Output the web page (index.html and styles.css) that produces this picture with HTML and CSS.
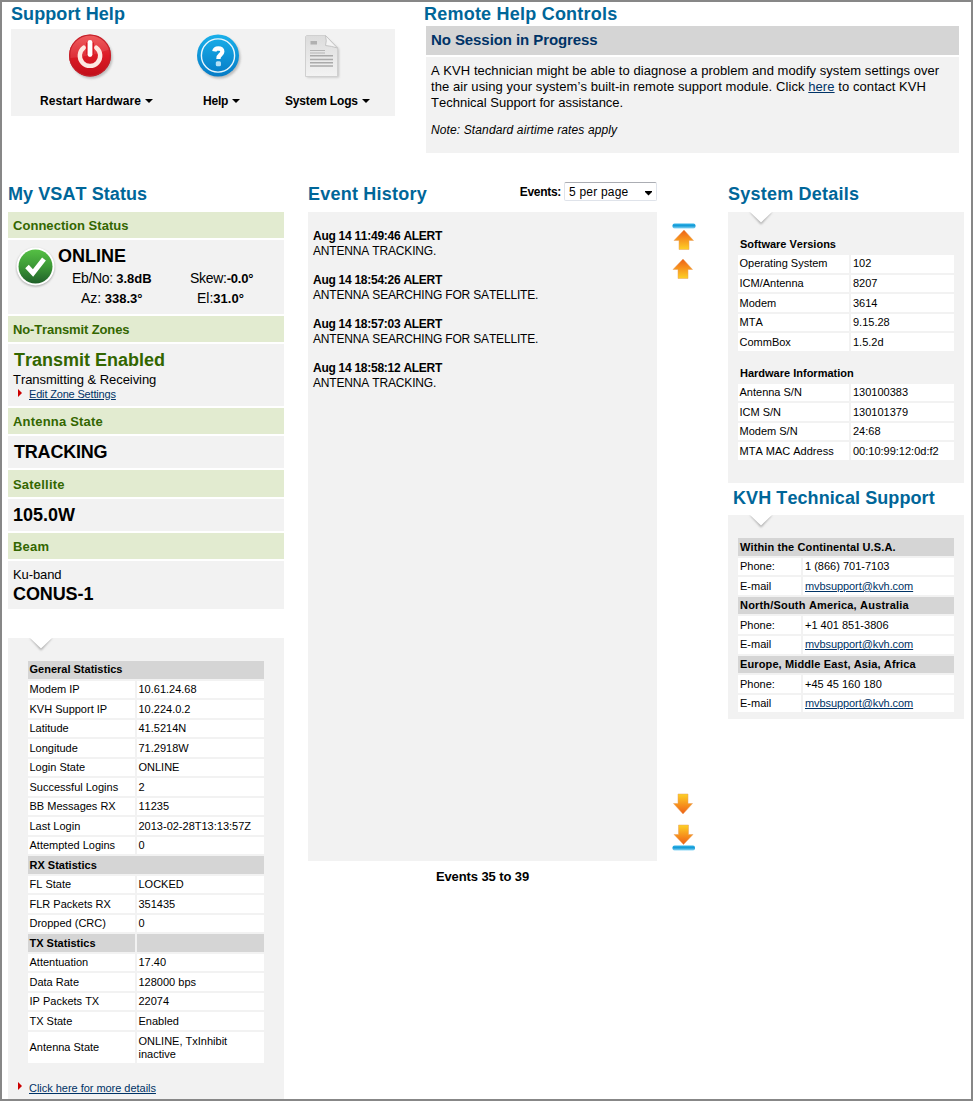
FILE: index.html
```
<!DOCTYPE html>
<html lang="en">
<head>
<meta charset="utf-8">
<title>VSAT Support</title>
<link rel="stylesheet" href="styles.css">
</head>
<body>
<div class="frame">
  <div class="top">
    <section class="support">
      <h2 class="title">Support Help</h2>
      <div class="toolbar">
        <div class="tool tool-restart">
          <svg class="tool-icon" width="46" height="48" viewBox="0 0 46 48">
            <defs>
              <linearGradient id="red" x1="0" y1="0" x2="0" y2="1"><stop offset="0" stop-color="#ee4a4c"/><stop offset=".5" stop-color="#dc1c26"/><stop offset="1" stop-color="#c00d18"/></linearGradient>
              <filter id="soft" x="-20%" y="-20%" width="140%" height="140%"><feGaussianBlur stdDeviation="1.3"/></filter>
            </defs>
            <circle cx="22.500" cy="23.500" r="21" fill="#999" opacity=".6" filter="url(#soft)"/>
            <circle cx="21" cy="21.500" r="21" fill="url(#red)"/>
            <circle cx="21" cy="21.500" r="20.300" fill="none" stroke="#c3202a" stroke-width="1.200"/>
            <path d="M1.500 24Q20 23 40 15.500A20 20 0 0 0 2 15Q1 20 1.500 24Z" fill="#fff" opacity=".1"/>
            <path d="M14.700 13.700A10.200 10.200 0 1 0 27.300 13.700" fill="none" stroke="#fde9e2" stroke-width="4.400" stroke-linecap="round"/>
            <path d="M21 8.500V20.500" stroke="#dc1c26" stroke-width="8"/>
            <path d="M21 8.500V20.500" stroke="#fff" stroke-width="4.800" stroke-linecap="round"/>
          </svg>
          <div class="tool-label"><span class="restart-text">Restart Hardware</span><i class="caret"></i></div>
        </div>
        <div class="tool tool-help">
          <svg class="tool-icon" width="46" height="48" viewBox="0 0 46 48">
            <defs>
              <linearGradient id="blue" x1="0" y1="0" x2="0" y2="1"><stop offset="0" stop-color="#1ab0ea"/><stop offset="1" stop-color="#057bc6"/></linearGradient>
            </defs>
            <circle cx="22.500" cy="23.500" r="21" fill="#999" opacity=".6" filter="url(#soft)"/>
            <circle cx="21" cy="21.500" r="21" fill="url(#blue)"/>
            <circle cx="21" cy="21.500" r="16.600" fill="none" stroke="#eaf7fd" stroke-width="1.400"/>
            <path d="M17.300 17.300Q17.800 14.400 21.300 14.400Q25.400 14.500 25.300 17.600Q25.200 19.300 23.400 20.800Q21.500 22.300 21.400 25" fill="none" stroke="#fff" stroke-width="4.300"/>
            <rect x="18.800" y="27.300" width="5.200" height="4.900" rx="1.500" fill="#b5e0f6"/>
          </svg>
          <div class="tool-label">Help<i class="caret"></i></div>
        </div>
        <div class="tool tool-logs">
          <svg class="tool-icon" width="40" height="48" viewBox="0 0 40 48">
            <defs>
              <linearGradient id="paper" x1="0" y1="0" x2="0" y2="1"><stop offset="0" stop-color="#dcdcdc"/><stop offset="1" stop-color="#f3f3f3"/></linearGradient>
            </defs>
            <path d="M2 4H22L34 15V43.500H2Z" fill="#999" opacity=".55" filter="url(#soft)"/>
            <path d="M1.500 1.500H20.500L32.500 14V42.500H.5V2.500Z" fill="url(#paper)" stroke="#d0d0d0"/>
            <path d="M20.500 1.500Q22 7 20.500 11.500Q26 12 32.500 14Z" fill="#f4f4f4" stroke="#c4c4c4"/>
            <rect x="5.500" y="7" width="6.500" height="3.500" fill="#b0b0b0"/>
            <path d="M5 16.500H20M5 19H20" stroke="#b4b4b4" stroke-width="1.200"/>
            <path d="M5 21.700H28M5 25.500H28M5 28.700H28M5 32H28" stroke="#aaa" stroke-width="1.400"/>
          </svg>
          <div class="tool-label"><span class="logs-text">System Logs</span><i class="caret"></i></div>
        </div>
      </div>
    </section>
    <section class="remote">
      <h2 class="title wide">Remote Help Controls</h2>
      <div class="session">No Session in Progress</div>
      <div class="session-body">
        <p><span class="l1">A KVH technician might be able to diagnose a problem and modify system settings over</span><br><span class="l2">the air using your system’s built-in remote support module. Click <a href="#">here</a> to contact KVH</span><br>Technical Support for assistance.</p>
        <p class="note">Note: Standard airtime rates apply</p>
      </div>
    </section>
  </div>

  <div class="main">
    <section class="status">
      <h2 class="title">My VSAT Status</h2>
      <h3 class="bar snug">Connection Status</h3>
      <div class="cell connection">
        <svg class="check" width="42" height="42" viewBox="0 0 42 42">
          <defs>
            <linearGradient id="green" x1="0" y1="0" x2="0" y2="1"><stop offset="0" stop-color="#55c044"/><stop offset=".5" stop-color="#3c9836"/><stop offset="1" stop-color="#20602a"/></linearGradient>
          </defs>
          <circle cx="20.500" cy="21.500" r="19" fill="#777" opacity=".6" filter="url(#soft)"/>
          <circle cx="20.500" cy="20.500" r="19" fill="#fff"/>
          <circle cx="20.500" cy="20.500" r="17" fill="url(#green)"/>
          <path d="M12 20.500L18 27L29 13" fill="none" stroke="#fff" stroke-width="4.800"/>
        </svg>
        <div class="readings">
          <div class="big online">ONLINE</div>
          <div class="pair"><span class="ebno">Eb/No: <b>3.8dB</b></span><span class="skew">Skew:<b>-0.0°</b></span></div>
          <div class="pair"><span class="az">Az: <b>338.3°</b></span><span class="el">El:<b>31.0°</b></span></div>
        </div>
      </div>
      <h3 class="bar tight">No-Transmit Zones</h3>
      <div class="cell zones">
        <div class="big enabled">Transmit Enabled</div>
        <div class="plain">Transmitting &amp; Receiving</div>
        <div class="more"><i class="tri"></i><a href="#">Edit Zone Settings</a></div>
      </div>
      <h3 class="bar">Antenna State</h3>
      <div class="cell single"><div class="big tracking">TRACKING</div></div>
      <h3 class="bar tall">Satellite</h3>
      <div class="cell single"><div class="big sat">105.0W</div></div>
      <h3 class="bar">Beam</h3>
      <div class="cell beam">
        <div class="plain">Ku-band</div>
        <div class="big conus">CONUS-1</div>
      </div>
      <div class="panel stats">
        <svg class="notch" width="26" height="16" viewBox="0 0 26 16"><path d="M2 0L13 12.500L24 0Z" fill="#aaa" filter="url(#soft)"/><path d="M2 0L13 10.500L24 0Z" fill="#fff"/></svg>
        <div class="table">
          <b class="span">General Statistics</b>
          <span>Modem IP</span><span>10.61.24.68</span>
          <span>KVH Support IP</span><span>10.224.0.2</span>
          <span>Latitude</span><span>41.5214N</span>
          <span>Longitude</span><span>71.2918W</span>
          <span>Login State</span><span>ONLINE</span>
          <span>Successful Logins</span><span>2</span>
          <span>BB Messages RX</span><span>11235</span>
          <span>Last Login</span><span>2013-02-28T13:13:57Z</span>
          <span>Attempted Logins</span><span>0</span>
          <b class="span">RX Statistics</b>
          <span>FL State</span><span>LOCKED</span>
          <span>FLR Packets RX</span><span>351435</span>
          <span>Dropped (CRC)</span><span>0</span>
          <b>TX Statistics</b><b></b>
          <span>Attentuation</span><span>17.40</span>
          <span>Data Rate</span><span>128000 bps</span>
          <span>IP Packets TX</span><span>22074</span>
          <span>TX State</span><span>Enabled</span>
          <span class="double mid">Antenna State</span><span class="double">ONLINE, TxInhibit<br>inactive</span>
        </div>
        <div class="more"><i class="tri"></i><a href="#">Click here for more details</a></div>
      </div>
    </section>

    <section class="events">
      <div class="events-head">
        <h2 class="title wide">Event History</h2>
        <div class="filter"><b>Events:</b><div class="select">5 per page<svg width="9" height="5" viewBox="0 0 9 5"><path d="M1 0H8V1L4.500 4.500L1 1Z"/></svg></div></div>
      </div>
      <div class="log">
        <p><b>Aug 14 11:49:46 ALERT</b><br>ANTENNA TRACKING.</p>
        <p><b>Aug 14 18:54:26 ALERT</b><br>ANTENNA SEARCHING FOR SATELLITE.</p>
        <p><b>Aug 14 18:57:03 ALERT</b><br>ANTENNA SEARCHING FOR SATELLITE.</p>
        <p><b>Aug 14 18:58:12 ALERT</b><br>ANTENNA TRACKING.</p>
      </div>
      <div class="count">Events 35 to 39</div>
    </section>

    <div class="pager">
      <div class="pager-group">
        <svg width="24" height="30" viewBox="0 0 24 30">
          <defs>
            <linearGradient id="up" x1="0" y1="0" x2="0" y2="1"><stop offset="0" stop-color="#ed5f17"/><stop offset=".4" stop-color="#f68b1c"/><stop offset="1" stop-color="#fdd126"/></linearGradient>
            <linearGradient id="rule" x1="0" y1="0" x2="0" y2="1"><stop offset="0" stop-color="#35b5e9"/><stop offset=".45" stop-color="#1199d6"/><stop offset="1" stop-color="#8fd8f6"/></linearGradient>
          </defs>
          <rect x=".5" y="1.500" width="23" height="5" rx="2" fill="url(#rule)"/>
          <path d="M12 8L21.500 18.500H17V27.500H7V18.500H2Z" fill="url(#up)" stroke="#e9a060" stroke-width=".5"/>
        </svg>
        <svg width="24" height="22" viewBox="0 0 24 22"><path d="M11 1L20.500 11.500H16V20.500H6V11.500H1Z" fill="url(#up)" stroke="#e9a060" stroke-width=".5"/></svg>
      </div>
      <div class="pager-group lower">
        <svg width="24" height="22" viewBox="0 0 24 22"><path d="M11 21L20.500 10.500H16V1H6V10.500H1.500Z" fill="url(#down)" stroke="#e9a060" stroke-width=".5"/></svg>
        <svg width="24" height="28" viewBox="0 0 24 28">
          <defs><linearGradient id="down" x1="0" y1="0" x2="0" y2="1"><stop offset="0" stop-color="#fdd126"/><stop offset=".6" stop-color="#f68b1c"/><stop offset="1" stop-color="#ed5f17"/></linearGradient></defs>
          <rect x=".5" y="21.500" width="22.500" height="5" rx="2" fill="url(#rule)"/>
          <path d="M11.500 20.500L21 10.500H16.500V1H6.500V10.500H2Z" fill="url(#down)" stroke="#e9a060" stroke-width=".5"/>
        </svg>
      </div>
    </div>

    <section class="details">
      <h2 class="title wide">System Details</h2>
      <div class="panel system">
        <svg class="notch" width="26" height="16" viewBox="0 0 26 16"><path d="M2 0L13 12.500L24 0Z" fill="#aaa" filter="url(#soft)"/><path d="M2 0L13 10.500L24 0Z" fill="#fff"/></svg>
        <h4 class="group">Software Versions</h4>
        <div class="table">
          <span>Operating System</span><span>102</span>
          <span>ICM/Antenna</span><span>8207</span>
          <span>Modem</span><span>3614</span>
          <span>MTA</span><span>9.15.28</span>
          <span>CommBox</span><span>1.5.2d</span>
        </div>
        <h4 class="group hardware">Hardware Information</h4>
        <div class="table">
          <span>Antenna S/N</span><span>130100383</span>
          <span>ICM S/N</span><span>130101379</span>
          <span>Modem S/N</span><span>24:68</span>
          <span>MTA MAC Address</span><span>00:10:99:12:0d:f2</span>
        </div>
      </div>
      <h2 class="title support-title">KVH Technical Support</h2>
      <div class="panel contact">
        <svg class="notch" width="26" height="16" viewBox="0 0 26 16"><path d="M2 0L13 12.500L24 0Z" fill="#aaa" filter="url(#soft)"/><path d="M2 0L13 10.500L24 0Z" fill="#fff"/></svg>
        <div class="table">
          <b class="span">Within the Continental U.S.A.</b>
          <span>Phone:</span><span>1 (866) 701-7103</span>
          <span>E-mail</span><span><a href="#">mvbsupport@kvh.com</a></span>
          <b class="span americas">North/South America, Australia</b>
          <span>Phone:</span><span>+1 401 851-3806</span>
          <span>E-mail</span><span><a href="#">mvbsupport@kvh.com</a></span>
          <b class="span">Europe, Middle East, Asia, Africa</b>
          <span>Phone:</span><span>+45 45 160 180</span>
          <span>E-mail</span><span><a href="#">mvbsupport@kvh.com</a></span>
        </div>
      </div>
    </section>
  </div>
</div>
</body>
</html>
```
FILE: styles.css
```
* { box-sizing: border-box; }
body { margin: 0; background: #fff; color: #000; font: 13px/16px "Liberation Sans", Arial, sans-serif; font-kerning: none; }
h2, h3, h4, p { margin: 0; }
a { color: #036; text-decoration: underline; }
svg { display: block; }
.frame { height: 1101px; border: 2px solid #878787; overflow: hidden; }
.title { font-size: 18px; line-height: 24px; color: #069; white-space: nowrap; letter-spacing: .08px; }
.title.wide { letter-spacing: .22px; }

.top { display: flex; height: 180px; }
.support { width: 384px; margin-left: 9px; }
.toolbar { display: flex; height: 87px; margin-top: 3px; padding: 5px 0 0 29px; background: #f2f2f2; }
.tool-restart { width: 156px; }
.tool-restart .tool-icon { margin-left: 29px; }
.tool-help { width: 89px; }
.tool-help .tool-icon { margin-left: 1px; }
.tool-help .tool-label { padding-left: 7px; letter-spacing: -.2px; }
.tool-logs .tool-icon { margin-left: 20px; }
.tool-icon { height: 48px; }
.tool-label { display: flex; align-items: center; margin-top: 11px; font-size: 12px; line-height: 16px; font-weight: bold; white-space: nowrap; }
.restart-text { letter-spacing: .11px; }
.logs-text { letter-spacing: -.17px; }
.caret { border: 4px solid transparent; border-top-color: #000; border-bottom: 0; margin: -1px 0 0 4px; }

.remote { width: 535px; margin-left: 29px; }
.session { height: 29px; margin-left: 2px; padding-left: 5px; background: #d5d5d5; color: #036; font-size: 15px; line-height: 28px; font-weight: bold; letter-spacing: -.08px; }
.session-body { height: 96px; margin: 2px 0 0 2px; padding: 6px 0 0 5px; background: #f2f2f2; white-space: nowrap; }
.l1 { letter-spacing: .045px; }
.l2 { letter-spacing: .078px; }
.note { margin-top: 11px; font-size: 12px; font-style: italic; letter-spacing: .12px; }

.main { display: flex; }
.status { width: 276px; margin-left: 6px; }
.status > .title { margin-bottom: 6px; }
.bar { height: 26px; padding-left: 5px; margin-bottom: 2px; background: #e2ebd0; color: #360; font-size: 13px; line-height: 27px; letter-spacing: .2px; }
.bar.snug { letter-spacing: .04px; }
.bar.tight { letter-spacing: -.12px; }
.bar.tall { height: 27px; line-height: 29px; }
.cell { padding-left: 5px; margin-bottom: 2px; background: #f2f2f2; }
.big { font-size: 18px; line-height: 20px; font-weight: bold; }
.connection { display: flex; height: 74px; padding: 6px 0 0 7px; }
.readings { margin-left: 1px; }
.pair { display: flex; height: 20px; line-height: 20px; font-size: 14px; }
.pair b { font-size: 13px; letter-spacing: 0; }
.online { line-height: 20px; height: 22px; }
.ebno { width: 118px; margin-left: 14px; letter-spacing: -.35px; }
.skew { letter-spacing: -.3px; }
.skew b { letter-spacing: -.2px; }
.az { width: 116px; margin-left: 23px; letter-spacing: -.1px; }
.zones { height: 62px; padding-top: 6px; }
.enabled { color: #360; padding-left: 1px; }
.zones .plain { line-height: 19px; letter-spacing: -.05px; }
.more { display: flex; align-items: center; height: 12px; font-size: 11px; line-height: 12px; padding-left: 5px; letter-spacing: -.03px; }
.zones .more { height: 10px; letter-spacing: -.17px; }
.tri { border: 4px solid transparent; border-left-color: #c00; border-right: 0; margin: -3px 7px 0 0; }
.single { height: 32px; padding-top: 6px; }
.tracking { padding-left: 1px; letter-spacing: -.2px; }
.beam { height: 48px; padding-top: 5px; }
.beam .plain { line-height: 18px; letter-spacing: -.1px; }
.conus { letter-spacing: -.1px; }

.panel { position: relative; background: #f2f2f2; }
.notch { position: absolute; left: 20px; top: 0; }
.stats { height: 470px; margin-top: 29px; padding: 23px 20px 0; }
.stats .more { margin: 19px 0 0 -15px; }
.table { display: grid; grid-template-columns: 107px 1fr; gap: 2px; font-size: 11px; line-height: 17.53px; white-space: nowrap; }
.table > * { height: 17.53px; padding: .47px 0 0 2px; background: #fff; }
.stats .table > * { padding-left: 1.5px; }
.table > b { background: #d5d5d5; }
.table > .span { grid-column: span 2; }
.table > .double { height: 31px; padding-top: 3px; line-height: 13px; }
.table > .mid { padding-top: 9px; }

.events { width: 349px; margin-left: 24px; }
.events-head { display: flex; justify-content: space-between; height: 30px; }
.filter { display: flex; height: 20px; font-size: 12px; line-height: 20px; }
.filter b { letter-spacing: -.3px; }
.select { display: flex; justify-content: space-between; align-items: center; width: 93px; height: 19px; margin-left: 3px; padding: 0 3px 0 4px; border: 1px solid #dfe3ea; border-top-color: #abadb3; border-radius: 2px; letter-spacing: .2px; }
.select svg { margin-top: 3px; }
.log { height: 649px; padding: 17px 5px 0; background: #f2f2f2; font-size: 12px; line-height: 14.5px; white-space: nowrap; }
.log p { height: 44px; letter-spacing: -.17px; }
.log b { letter-spacing: -.27px; }
.count { margin-top: 8px; font-size: 13px; font-weight: bold; text-align: center; letter-spacing: -.1px; }

.pager { display: flex; flex-direction: column; justify-content: space-between; width: 24px; height: 630px; margin: 40px 0 0 15px; }
.pager-group { display: flex; flex-direction: column; gap: 6px; }
.pager-group.lower { gap: 9px; }

.details { width: 236px; margin-left: 32px; }
.details > .title { margin-bottom: 6px; }
.system { height: 271px; padding: 23px 10px 0; }
.system .table { grid-template-columns: 111px 1fr; }
.system .table > * { padding-left: 1.5px; }
.system .table > :nth-child(even) { padding-left: 2px; }
.group { height: 20px; padding-left: 2px; font-size: 11px; line-height: 18px; }
.hardware { margin-top: 13px; }
.details > .support-title { height: 24px; margin: 3px 0 5px 5px; }
.contact { height: 204px; padding: 23px 10px 0; }
.contact .table { grid-template-columns: 63px 1fr; line-height: 17.6px; }
.contact .table > * { height: 17.6px; padding-top: .5px; }
.contact .table > b { letter-spacing: .12px; }
.contact .table > .americas { letter-spacing: .19px; }
.contact a { letter-spacing: -.08px; }
```
